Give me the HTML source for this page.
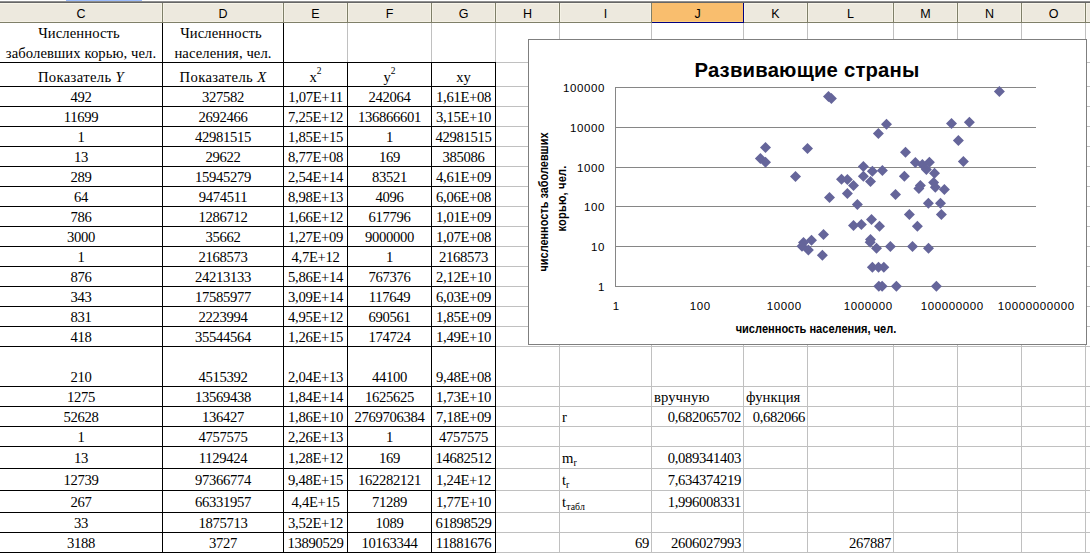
<!DOCTYPE html>
<html><head><meta charset="utf-8"><style>
*{margin:0;padding:0}
html,body{width:1090px;height:553px;overflow:hidden;background:#fff}
body{position:relative}
#pg>div{position:absolute}
.hl{position:absolute;top:4px;height:17px;line-height:21px;text-align:center;font-family:"Liberation Sans",sans-serif;font-size:12.5px;color:#000}
.c{position:absolute;white-space:nowrap;font-family:"Liberation Serif",serif;font-size:14.67px;line-height:16px;color:#000}
.n{letter-spacing:-0.33px}
.t{letter-spacing:0.08px}
sup{font-size:9.5px;vertical-align:8px;line-height:0}
sub{font-size:9.8px;vertical-align:-3px;line-height:0}
</style></head>
<body><div id="pg"><div style="left:66px;top:0px;width:76px;height:1px;background:#9cbcfc;"></div><div style="left:0px;top:1px;width:1090px;height:1px;background:#8f8f8f;"></div><div style="left:0px;top:2px;width:1090px;height:1px;background:#666666;"></div><div style="left:0px;top:3px;width:1090px;height:19px;background:#ede9de;"></div><div style="left:0px;top:3px;width:1090px;height:1px;background:#f7f4e8;"></div><div style="left:0px;top:21px;width:1090px;height:1px;background:#f5f1e5;"></div><div style="left:0px;top:22px;width:1090px;height:1px;background:#7f7f69;"></div><div style="left:161px;top:3px;width:1px;height:18px;background:#f5f2e6;"></div><div style="left:163px;top:3px;width:1px;height:18px;background:#f5f2e6;"></div><div style="left:162px;top:3px;width:1px;height:20px;background:#7f7f69;"></div><div style="left:282px;top:3px;width:1px;height:18px;background:#f5f2e6;"></div><div style="left:284px;top:3px;width:1px;height:18px;background:#f5f2e6;"></div><div style="left:283px;top:3px;width:1px;height:20px;background:#7f7f69;"></div><div style="left:346px;top:3px;width:1px;height:18px;background:#f5f2e6;"></div><div style="left:348px;top:3px;width:1px;height:18px;background:#f5f2e6;"></div><div style="left:347px;top:3px;width:1px;height:20px;background:#7f7f69;"></div><div style="left:430px;top:3px;width:1px;height:18px;background:#f5f2e6;"></div><div style="left:432px;top:3px;width:1px;height:18px;background:#f5f2e6;"></div><div style="left:431px;top:3px;width:1px;height:20px;background:#7f7f69;"></div><div style="left:494px;top:3px;width:1px;height:18px;background:#f5f2e6;"></div><div style="left:496px;top:3px;width:1px;height:18px;background:#f5f2e6;"></div><div style="left:495px;top:3px;width:1px;height:20px;background:#7f7f69;"></div><div style="left:558px;top:3px;width:1px;height:18px;background:#f5f2e6;"></div><div style="left:560px;top:3px;width:1px;height:18px;background:#f5f2e6;"></div><div style="left:559px;top:3px;width:1px;height:20px;background:#7f7f69;"></div><div style="left:650px;top:3px;width:1px;height:18px;background:#f5f2e6;"></div><div style="left:652px;top:3px;width:1px;height:18px;background:#f5f2e6;"></div><div style="left:651px;top:3px;width:1px;height:20px;background:#7f7f69;"></div><div style="left:742px;top:3px;width:1px;height:18px;background:#f5f2e6;"></div><div style="left:744px;top:3px;width:1px;height:18px;background:#f5f2e6;"></div><div style="left:743px;top:3px;width:1px;height:20px;background:#7f7f69;"></div><div style="left:806px;top:3px;width:1px;height:18px;background:#f5f2e6;"></div><div style="left:808px;top:3px;width:1px;height:18px;background:#f5f2e6;"></div><div style="left:807px;top:3px;width:1px;height:20px;background:#7f7f69;"></div><div style="left:892px;top:3px;width:1px;height:18px;background:#f5f2e6;"></div><div style="left:894px;top:3px;width:1px;height:18px;background:#f5f2e6;"></div><div style="left:893px;top:3px;width:1px;height:20px;background:#7f7f69;"></div><div style="left:956px;top:3px;width:1px;height:18px;background:#f5f2e6;"></div><div style="left:958px;top:3px;width:1px;height:18px;background:#f5f2e6;"></div><div style="left:957px;top:3px;width:1px;height:20px;background:#7f7f69;"></div><div style="left:1020px;top:3px;width:1px;height:18px;background:#f5f2e6;"></div><div style="left:1022px;top:3px;width:1px;height:18px;background:#f5f2e6;"></div><div style="left:1021px;top:3px;width:1px;height:20px;background:#7f7f69;"></div><div style="left:1084px;top:3px;width:1px;height:18px;background:#f5f2e6;"></div><div style="left:1086px;top:3px;width:1px;height:18px;background:#f5f2e6;"></div><div style="left:1085px;top:3px;width:1px;height:20px;background:#7f7f69;"></div><div style="left:652px;top:3px;width:91px;height:18px;background:#f9be6e;"></div><div style="left:652px;top:21px;width:91px;height:1px;background:#fbcf80;"></div><div style="left:652px;top:22px;width:92px;height:1px;background:#000080;"></div><div style="left:743px;top:3px;width:1px;height:20px;background:#000080;"></div><div class="hl" style="left:0px;width:162px;">C</div><div class="hl" style="left:163px;width:120px;">D</div><div class="hl" style="left:284px;width:63px;">E</div><div class="hl" style="left:348px;width:83px;">F</div><div class="hl" style="left:432px;width:63px;">G</div><div class="hl" style="left:496px;width:63px;">H</div><div class="hl" style="left:560px;width:91px;">I</div><div class="hl" style="left:652px;width:91px;">J</div><div class="hl" style="left:744px;width:63px;">K</div><div class="hl" style="left:808px;width:85px;">L</div><div class="hl" style="left:894px;width:63px;">M</div><div class="hl" style="left:958px;width:63px;">N</div><div class="hl" style="left:1022px;width:63px;">O</div><div style="left:162px;top:23px;width:1px;height:530px;background:#c0c0c0;"></div><div style="left:283px;top:23px;width:1px;height:530px;background:#c0c0c0;"></div><div style="left:347px;top:23px;width:1px;height:530px;background:#c0c0c0;"></div><div style="left:431px;top:23px;width:1px;height:530px;background:#c0c0c0;"></div><div style="left:495px;top:23px;width:1px;height:530px;background:#c0c0c0;"></div><div style="left:559px;top:23px;width:1px;height:530px;background:#c0c0c0;"></div><div style="left:651px;top:23px;width:1px;height:530px;background:#c0c0c0;"></div><div style="left:743px;top:23px;width:1px;height:530px;background:#c0c0c0;"></div><div style="left:807px;top:23px;width:1px;height:530px;background:#c0c0c0;"></div><div style="left:893px;top:23px;width:1px;height:530px;background:#c0c0c0;"></div><div style="left:957px;top:23px;width:1px;height:530px;background:#c0c0c0;"></div><div style="left:1021px;top:23px;width:1px;height:530px;background:#c0c0c0;"></div><div style="left:1085px;top:23px;width:1px;height:530px;background:#c0c0c0;"></div><div style="left:0px;top:62px;width:1090px;height:1px;background:#c0c0c0;"></div><div style="left:0px;top:86px;width:1090px;height:1px;background:#c0c0c0;"></div><div style="left:0px;top:106px;width:1090px;height:1px;background:#c0c0c0;"></div><div style="left:0px;top:126px;width:1090px;height:1px;background:#c0c0c0;"></div><div style="left:0px;top:146px;width:1090px;height:1px;background:#c0c0c0;"></div><div style="left:0px;top:166px;width:1090px;height:1px;background:#c0c0c0;"></div><div style="left:0px;top:186px;width:1090px;height:1px;background:#c0c0c0;"></div><div style="left:0px;top:206px;width:1090px;height:1px;background:#c0c0c0;"></div><div style="left:0px;top:226px;width:1090px;height:1px;background:#c0c0c0;"></div><div style="left:0px;top:246px;width:1090px;height:1px;background:#c0c0c0;"></div><div style="left:0px;top:266px;width:1090px;height:1px;background:#c0c0c0;"></div><div style="left:0px;top:286px;width:1090px;height:1px;background:#c0c0c0;"></div><div style="left:0px;top:306px;width:1090px;height:1px;background:#c0c0c0;"></div><div style="left:0px;top:326px;width:1090px;height:1px;background:#c0c0c0;"></div><div style="left:0px;top:346px;width:1090px;height:1px;background:#c0c0c0;"></div><div style="left:0px;top:386px;width:1090px;height:1px;background:#c0c0c0;"></div><div style="left:0px;top:406px;width:1090px;height:1px;background:#c0c0c0;"></div><div style="left:0px;top:426px;width:1090px;height:1px;background:#c0c0c0;"></div><div style="left:0px;top:446px;width:1090px;height:1px;background:#c0c0c0;"></div><div style="left:0px;top:468px;width:1090px;height:1px;background:#c0c0c0;"></div><div style="left:0px;top:490px;width:1090px;height:1px;background:#c0c0c0;"></div><div style="left:0px;top:512px;width:1090px;height:1px;background:#c0c0c0;"></div><div style="left:0px;top:532px;width:1090px;height:1px;background:#c0c0c0;"></div><div style="left:0px;top:552px;width:1090px;height:1px;background:#c0c0c0;"></div><div style="left:162px;top:23px;width:1px;height:530px;background:#000;"></div><div style="left:283px;top:23px;width:1px;height:530px;background:#000;"></div><div style="left:347px;top:62px;width:1px;height:491px;background:#000;"></div><div style="left:431px;top:62px;width:1px;height:491px;background:#000;"></div><div style="left:495px;top:62px;width:1px;height:491px;background:#000;"></div><div style="left:0px;top:62px;width:496px;height:1px;background:#000;"></div><div style="left:0px;top:86px;width:496px;height:1px;background:#000;"></div><div style="left:0px;top:106px;width:496px;height:1px;background:#000;"></div><div style="left:0px;top:126px;width:496px;height:1px;background:#000;"></div><div style="left:0px;top:146px;width:496px;height:1px;background:#000;"></div><div style="left:0px;top:166px;width:496px;height:1px;background:#000;"></div><div style="left:0px;top:186px;width:496px;height:1px;background:#000;"></div><div style="left:0px;top:206px;width:496px;height:1px;background:#000;"></div><div style="left:0px;top:226px;width:496px;height:1px;background:#000;"></div><div style="left:0px;top:246px;width:496px;height:1px;background:#000;"></div><div style="left:0px;top:266px;width:496px;height:1px;background:#000;"></div><div style="left:0px;top:286px;width:496px;height:1px;background:#000;"></div><div style="left:0px;top:306px;width:496px;height:1px;background:#000;"></div><div style="left:0px;top:326px;width:496px;height:1px;background:#000;"></div><div style="left:0px;top:346px;width:496px;height:1px;background:#000;"></div><div style="left:0px;top:386px;width:496px;height:1px;background:#000;"></div><div style="left:0px;top:406px;width:496px;height:1px;background:#000;"></div><div style="left:0px;top:426px;width:496px;height:1px;background:#000;"></div><div style="left:0px;top:446px;width:496px;height:1px;background:#000;"></div><div style="left:0px;top:468px;width:496px;height:1px;background:#000;"></div><div style="left:0px;top:490px;width:496px;height:1px;background:#000;"></div><div style="left:0px;top:512px;width:496px;height:1px;background:#000;"></div><div style="left:0px;top:532px;width:496px;height:1px;background:#000;"></div><div style="left:0px;top:552px;width:496px;height:1px;background:#000;"></div><div class="c n" style="left:0px;width:162px;top:89px;text-align:center">492</div><div class="c n" style="left:163px;width:120px;top:89px;text-align:center">327582</div><div class="c n" style="left:284px;width:63px;top:89px;text-align:center">1,07E+11</div><div class="c n" style="left:348px;width:83px;top:89px;text-align:center">242064</div><div class="c n" style="left:432px;width:63px;top:89px;text-align:center">1,61E+08</div><div class="c n" style="left:0px;width:162px;top:109px;text-align:center">11699</div><div class="c n" style="left:163px;width:120px;top:109px;text-align:center">2692466</div><div class="c n" style="left:284px;width:63px;top:109px;text-align:center">7,25E+12</div><div class="c n" style="left:348px;width:83px;top:109px;text-align:center">136866601</div><div class="c n" style="left:432px;width:63px;top:109px;text-align:center">3,15E+10</div><div class="c n" style="left:0px;width:162px;top:129px;text-align:center">1</div><div class="c n" style="left:163px;width:120px;top:129px;text-align:center">42981515</div><div class="c n" style="left:284px;width:63px;top:129px;text-align:center">1,85E+15</div><div class="c n" style="left:348px;width:83px;top:129px;text-align:center">1</div><div class="c n" style="left:432px;width:63px;top:129px;text-align:center">42981515</div><div class="c n" style="left:0px;width:162px;top:149px;text-align:center">13</div><div class="c n" style="left:163px;width:120px;top:149px;text-align:center">29622</div><div class="c n" style="left:284px;width:63px;top:149px;text-align:center">8,77E+08</div><div class="c n" style="left:348px;width:83px;top:149px;text-align:center">169</div><div class="c n" style="left:432px;width:63px;top:149px;text-align:center">385086</div><div class="c n" style="left:0px;width:162px;top:169px;text-align:center">289</div><div class="c n" style="left:163px;width:120px;top:169px;text-align:center">15945279</div><div class="c n" style="left:284px;width:63px;top:169px;text-align:center">2,54E+14</div><div class="c n" style="left:348px;width:83px;top:169px;text-align:center">83521</div><div class="c n" style="left:432px;width:63px;top:169px;text-align:center">4,61E+09</div><div class="c n" style="left:0px;width:162px;top:189px;text-align:center">64</div><div class="c n" style="left:163px;width:120px;top:189px;text-align:center">9474511</div><div class="c n" style="left:284px;width:63px;top:189px;text-align:center">8,98E+13</div><div class="c n" style="left:348px;width:83px;top:189px;text-align:center">4096</div><div class="c n" style="left:432px;width:63px;top:189px;text-align:center">6,06E+08</div><div class="c n" style="left:0px;width:162px;top:209px;text-align:center">786</div><div class="c n" style="left:163px;width:120px;top:209px;text-align:center">1286712</div><div class="c n" style="left:284px;width:63px;top:209px;text-align:center">1,66E+12</div><div class="c n" style="left:348px;width:83px;top:209px;text-align:center">617796</div><div class="c n" style="left:432px;width:63px;top:209px;text-align:center">1,01E+09</div><div class="c n" style="left:0px;width:162px;top:229px;text-align:center">3000</div><div class="c n" style="left:163px;width:120px;top:229px;text-align:center">35662</div><div class="c n" style="left:284px;width:63px;top:229px;text-align:center">1,27E+09</div><div class="c n" style="left:348px;width:83px;top:229px;text-align:center">9000000</div><div class="c n" style="left:432px;width:63px;top:229px;text-align:center">1,07E+08</div><div class="c n" style="left:0px;width:162px;top:249px;text-align:center">1</div><div class="c n" style="left:163px;width:120px;top:249px;text-align:center">2168573</div><div class="c n" style="left:284px;width:63px;top:249px;text-align:center">4,7E+12</div><div class="c n" style="left:348px;width:83px;top:249px;text-align:center">1</div><div class="c n" style="left:432px;width:63px;top:249px;text-align:center">2168573</div><div class="c n" style="left:0px;width:162px;top:269px;text-align:center">876</div><div class="c n" style="left:163px;width:120px;top:269px;text-align:center">24213133</div><div class="c n" style="left:284px;width:63px;top:269px;text-align:center">5,86E+14</div><div class="c n" style="left:348px;width:83px;top:269px;text-align:center">767376</div><div class="c n" style="left:432px;width:63px;top:269px;text-align:center">2,12E+10</div><div class="c n" style="left:0px;width:162px;top:289px;text-align:center">343</div><div class="c n" style="left:163px;width:120px;top:289px;text-align:center">17585977</div><div class="c n" style="left:284px;width:63px;top:289px;text-align:center">3,09E+14</div><div class="c n" style="left:348px;width:83px;top:289px;text-align:center">117649</div><div class="c n" style="left:432px;width:63px;top:289px;text-align:center">6,03E+09</div><div class="c n" style="left:0px;width:162px;top:309px;text-align:center">831</div><div class="c n" style="left:163px;width:120px;top:309px;text-align:center">2223994</div><div class="c n" style="left:284px;width:63px;top:309px;text-align:center">4,95E+12</div><div class="c n" style="left:348px;width:83px;top:309px;text-align:center">690561</div><div class="c n" style="left:432px;width:63px;top:309px;text-align:center">1,85E+09</div><div class="c n" style="left:0px;width:162px;top:329px;text-align:center">418</div><div class="c n" style="left:163px;width:120px;top:329px;text-align:center">35544564</div><div class="c n" style="left:284px;width:63px;top:329px;text-align:center">1,26E+15</div><div class="c n" style="left:348px;width:83px;top:329px;text-align:center">174724</div><div class="c n" style="left:432px;width:63px;top:329px;text-align:center">1,49E+10</div><div class="c n" style="left:0px;width:162px;top:369px;text-align:center">210</div><div class="c n" style="left:163px;width:120px;top:369px;text-align:center">4515392</div><div class="c n" style="left:284px;width:63px;top:369px;text-align:center">2,04E+13</div><div class="c n" style="left:348px;width:83px;top:369px;text-align:center">44100</div><div class="c n" style="left:432px;width:63px;top:369px;text-align:center">9,48E+08</div><div class="c n" style="left:0px;width:162px;top:389px;text-align:center">1275</div><div class="c n" style="left:163px;width:120px;top:389px;text-align:center">13569438</div><div class="c n" style="left:284px;width:63px;top:389px;text-align:center">1,84E+14</div><div class="c n" style="left:348px;width:83px;top:389px;text-align:center">1625625</div><div class="c n" style="left:432px;width:63px;top:389px;text-align:center">1,73E+10</div><div class="c n" style="left:0px;width:162px;top:409px;text-align:center">52628</div><div class="c n" style="left:163px;width:120px;top:409px;text-align:center">136427</div><div class="c n" style="left:284px;width:63px;top:409px;text-align:center">1,86E+10</div><div class="c n" style="left:348px;width:83px;top:409px;text-align:center">2769706384</div><div class="c n" style="left:432px;width:63px;top:409px;text-align:center">7,18E+09</div><div class="c n" style="left:0px;width:162px;top:429px;text-align:center">1</div><div class="c n" style="left:163px;width:120px;top:429px;text-align:center">4757575</div><div class="c n" style="left:284px;width:63px;top:429px;text-align:center">2,26E+13</div><div class="c n" style="left:348px;width:83px;top:429px;text-align:center">1</div><div class="c n" style="left:432px;width:63px;top:429px;text-align:center">4757575</div><div class="c n" style="left:0px;width:162px;top:450px;text-align:center">13</div><div class="c n" style="left:163px;width:120px;top:450px;text-align:center">1129424</div><div class="c n" style="left:284px;width:63px;top:450px;text-align:center">1,28E+12</div><div class="c n" style="left:348px;width:83px;top:450px;text-align:center">169</div><div class="c n" style="left:432px;width:63px;top:450px;text-align:center">14682512</div><div class="c n" style="left:0px;width:162px;top:472px;text-align:center">12739</div><div class="c n" style="left:163px;width:120px;top:472px;text-align:center">97366774</div><div class="c n" style="left:284px;width:63px;top:472px;text-align:center">9,48E+15</div><div class="c n" style="left:348px;width:83px;top:472px;text-align:center">162282121</div><div class="c n" style="left:432px;width:63px;top:472px;text-align:center">1,24E+12</div><div class="c n" style="left:0px;width:162px;top:494px;text-align:center">267</div><div class="c n" style="left:163px;width:120px;top:494px;text-align:center">66331957</div><div class="c n" style="left:284px;width:63px;top:494px;text-align:center">4,4E+15</div><div class="c n" style="left:348px;width:83px;top:494px;text-align:center">71289</div><div class="c n" style="left:432px;width:63px;top:494px;text-align:center">1,77E+10</div><div class="c n" style="left:0px;width:162px;top:515px;text-align:center">33</div><div class="c n" style="left:163px;width:120px;top:515px;text-align:center">1875713</div><div class="c n" style="left:284px;width:63px;top:515px;text-align:center">3,52E+12</div><div class="c n" style="left:348px;width:83px;top:515px;text-align:center">1089</div><div class="c n" style="left:432px;width:63px;top:515px;text-align:center">61898529</div><div class="c n" style="left:0px;width:162px;top:535px;text-align:center">3188</div><div class="c n" style="left:163px;width:120px;top:535px;text-align:center">3727</div><div class="c n" style="left:284px;width:63px;top:535px;text-align:center">13890529</div><div class="c n" style="left:348px;width:83px;top:535px;text-align:center">10163344</div><div class="c n" style="left:432px;width:63px;top:535px;text-align:center">11881676</div><div class="c t" style="left:0px;width:158px;top:25px;text-align:center">Численность</div><div class="c t" style="left:0px;width:162px;top:45px;text-align:center">заболевших корью, чел.</div><div class="c t" style="left:163px;width:116px;top:25px;text-align:center">Численность</div><div class="c t" style="left:163px;width:120px;top:45px;text-align:center">населения, чел.</div><div class="c t" style="left:0px;width:162px;top:69px;text-align:center"><span style="letter-spacing:0.35px">Показатель <i>Y</i></span></div><div class="c t" style="left:163px;width:120px;top:69px;text-align:center"><span style="letter-spacing:0.35px">Показатель <i>X</i></span></div><div class="c" style="left:284px;width:63px;top:69px;text-align:center">x<sup>2</sup></div><div class="c" style="left:348px;width:83px;top:69px;text-align:center">y<sup>2</sup></div><div class="c" style="left:432px;width:63px;top:69px;text-align:center">xy</div><div class="c t" style="left:654px;top:389px;">вручную</div><div class="c t" style="left:746px;top:389px;">функция</div><div class="c" style="left:562px;top:409px;">r</div><div class="c n" style="left:652px;width:89px;top:409px;text-align:right">0,682065702</div><div class="c n" style="left:744px;width:61px;top:409px;text-align:right">0,682066</div><div class="c" style="left:562px;top:450px;">m<sub>r</sub></div><div class="c n" style="left:652px;width:89px;top:450px;text-align:right">0,089341403</div><div class="c" style="left:562px;top:472px;">t<sub>r</sub></div><div class="c n" style="left:652px;width:89px;top:472px;text-align:right">7,634374219</div><div class="c t" style="left:562px;top:494px;">t<sub>табл</sub></div><div class="c n" style="left:652px;width:89px;top:494px;text-align:right">1,996008331</div><div class="c n" style="left:560px;width:89px;top:535px;text-align:right">69</div><div class="c n" style="left:652px;width:89px;top:535px;text-align:right">2606027993</div><div class="c n" style="left:808px;width:83px;top:535px;text-align:right">267887</div></div><svg width="1090" height="553" viewBox="0 0 1090 553" style="position:absolute;left:0;top:0"><rect x="528.5" y="39.5" width="558" height="305" fill="#fff" stroke="#7f7f7f" stroke-width="1"/><rect x="615" y="87" width="421" height="1" fill="#868686"/><rect x="615" y="127" width="421" height="1" fill="#868686"/><rect x="615" y="167" width="421" height="1" fill="#868686"/><rect x="615" y="206" width="421" height="1" fill="#868686"/><rect x="615" y="246" width="421" height="1" fill="#868686"/><rect x="615" y="286" width="421" height="1" fill="#868686"/><rect x="615" y="87" width="1" height="200" fill="#868686"/><path d="M765.5 141.9L771.0 147.4L765.5 152.9L760.0 147.4Z" fill="#65659a"/><path d="M760.4 152.9L765.9 158.4L760.4 163.9L754.9 158.4Z" fill="#65659a"/><path d="M765.5 156.7L771.0 162.2L765.5 167.7L760.0 162.2Z" fill="#65659a"/><path d="M807.5 142.9L813.0 148.4L807.5 153.9L802.0 148.4Z" fill="#65659a"/><path d="M795.5 170.9L801.0 176.4L795.5 181.9L790.0 176.4Z" fill="#65659a"/><path d="M828.5 91.0L834.0 96.5L828.5 102.0L823.0 96.5Z" fill="#65659a"/><path d="M831.4 93.0L836.9 98.5L831.4 104.0L825.9 98.5Z" fill="#65659a"/><path d="M829.5 191.9L835.0 197.4L829.5 202.9L824.0 197.4Z" fill="#65659a"/><path d="M823.5 229.0L829.0 234.5L823.5 240.0L818.0 234.5Z" fill="#65659a"/><path d="M811.5 234.8L817.0 240.3L811.5 245.8L806.0 240.3Z" fill="#65659a"/><path d="M803.5 237.1L809.0 242.6L803.5 248.1L798.0 242.6Z" fill="#65659a"/><path d="M802.0 240.8L807.5 246.3L802.0 251.8L796.5 246.3Z" fill="#65659a"/><path d="M808.4 244.6L813.9 250.1L808.4 255.6L802.9 250.1Z" fill="#65659a"/><path d="M822.4 249.8L827.9 255.3L822.4 260.8L816.9 255.3Z" fill="#65659a"/><path d="M886.5 118.8L892.0 124.3L886.5 129.8L881.0 124.3Z" fill="#65659a"/><path d="M878.4 127.9L883.9 133.4L878.4 138.9L872.9 133.4Z" fill="#65659a"/><path d="M863.4 160.9L868.9 166.4L863.4 171.9L857.9 166.4Z" fill="#65659a"/><path d="M872.4 165.8L877.9 171.3L872.4 176.8L866.9 171.3Z" fill="#65659a"/><path d="M882.4 165.1L887.9 170.6L882.4 176.1L876.9 170.6Z" fill="#65659a"/><path d="M863.4 170.8L868.9 176.3L863.4 181.8L857.9 176.3Z" fill="#65659a"/><path d="M870.5 175.9L876.0 181.4L870.5 186.9L865.0 181.4Z" fill="#65659a"/><path d="M841.5 173.7L847.0 179.2L841.5 184.7L836.0 179.2Z" fill="#65659a"/><path d="M847.4 173.9L852.9 179.4L847.4 184.9L841.9 179.4Z" fill="#65659a"/><path d="M853.5 179.9L859.0 185.4L853.5 190.9L848.0 185.4Z" fill="#65659a"/><path d="M847.4 187.9L852.9 193.4L847.4 198.9L841.9 193.4Z" fill="#65659a"/><path d="M905.5 146.8L911.0 152.3L905.5 157.8L900.0 152.3Z" fill="#65659a"/><path d="M915.4 156.9L920.9 162.4L915.4 167.9L909.9 162.4Z" fill="#65659a"/><path d="M922.4 159.0L927.9 164.5L922.4 170.0L916.9 164.5Z" fill="#65659a"/><path d="M929.4 156.8L934.9 162.3L929.4 167.8L923.9 162.3Z" fill="#65659a"/><path d="M926.4 164.0L931.9 169.5L926.4 175.0L920.9 169.5Z" fill="#65659a"/><path d="M904.4 170.8L909.9 176.3L904.4 181.8L898.9 176.3Z" fill="#65659a"/><path d="M934.5 167.8L940.0 173.3L934.5 178.8L929.0 173.3Z" fill="#65659a"/><path d="M920.4 180.0L925.9 185.5L920.4 191.0L914.9 185.5Z" fill="#65659a"/><path d="M933.6 177.0L939.1 182.5L933.6 188.0L928.1 182.5Z" fill="#65659a"/><path d="M944.4 183.9L949.9 189.4L944.4 194.9L938.9 189.4Z" fill="#65659a"/><path d="M935.3 181.7L940.8 187.2L935.3 192.7L929.8 187.2Z" fill="#65659a"/><path d="M918.9 183.1L924.4 188.6L918.9 194.1L913.4 188.6Z" fill="#65659a"/><path d="M895.5 188.9L901.0 194.4L895.5 199.9L890.0 194.4Z" fill="#65659a"/><path d="M928.4 197.8L933.9 203.3L928.4 208.8L922.9 203.3Z" fill="#65659a"/><path d="M940.5 197.7L946.0 203.2L940.5 208.7L935.0 203.2Z" fill="#65659a"/><path d="M909.4 208.9L914.9 214.4L909.4 219.9L903.9 214.4Z" fill="#65659a"/><path d="M941.4 208.9L946.9 214.4L941.4 219.9L935.9 214.4Z" fill="#65659a"/><path d="M857.4 198.9L862.9 204.4L857.4 209.9L851.9 204.4Z" fill="#65659a"/><path d="M871.5 213.9L877.0 219.4L871.5 224.9L866.0 219.4Z" fill="#65659a"/><path d="M853.5 220.0L859.0 225.5L853.5 231.0L848.0 225.5Z" fill="#65659a"/><path d="M861.4 218.9L866.9 224.4L861.4 229.9L855.9 224.4Z" fill="#65659a"/><path d="M879.5 220.8L885.0 226.3L879.5 231.8L874.0 226.3Z" fill="#65659a"/><path d="M917.4 220.8L922.9 226.3L917.4 231.8L911.9 226.3Z" fill="#65659a"/><path d="M870.5 234.1L876.0 239.6L870.5 245.1L865.0 239.6Z" fill="#65659a"/><path d="M870.2 236.7L875.7 242.2L870.2 247.7L864.7 242.2Z" fill="#65659a"/><path d="M876.5 242.7L882.0 248.2L876.5 253.7L871.0 248.2Z" fill="#65659a"/><path d="M890.4 240.9L895.9 246.4L890.4 251.9L884.9 246.4Z" fill="#65659a"/><path d="M912.5 241.0L918.0 246.5L912.5 252.0L907.0 246.5Z" fill="#65659a"/><path d="M928.5 242.8L934.0 248.3L928.5 253.8L923.0 248.3Z" fill="#65659a"/><path d="M872.4 261.8L877.9 267.3L872.4 272.8L866.9 267.3Z" fill="#65659a"/><path d="M878.5 261.8L884.0 267.3L878.5 272.8L873.0 267.3Z" fill="#65659a"/><path d="M883.8 261.8L889.3 267.3L883.8 272.8L878.3 267.3Z" fill="#65659a"/><path d="M878.8 280.8L884.3 286.3L878.8 291.8L873.3 286.3Z" fill="#65659a"/><path d="M882.1 280.8L887.6 286.3L882.1 291.8L876.6 286.3Z" fill="#65659a"/><path d="M896.4 280.8L901.9 286.3L896.4 291.8L890.9 286.3Z" fill="#65659a"/><path d="M936.4 280.8L941.9 286.3L936.4 291.8L930.9 286.3Z" fill="#65659a"/><path d="M999.4 85.9L1004.9 91.4L999.4 96.9L993.9 91.4Z" fill="#65659a"/><path d="M951.5 117.9L957.0 123.4L951.5 128.9L946.0 123.4Z" fill="#65659a"/><path d="M969.4 116.8L974.9 122.3L969.4 127.8L963.9 122.3Z" fill="#65659a"/><path d="M958.4 135.0L963.9 140.5L958.4 146.0L952.9 140.5Z" fill="#65659a"/><path d="M963.4 156.0L968.9 161.5L963.4 167.0L957.9 161.5Z" fill="#65659a"/><text x="807" y="77" text-anchor="middle" font-family="Liberation Sans" font-weight="bold" font-size="20.3" letter-spacing="0.2">Развивающие страны</text><text x="605" y="291" text-anchor="end" font-family="Liberation Sans" font-size="11.5" letter-spacing="0.62">1</text><text x="605" y="251" text-anchor="end" font-family="Liberation Sans" font-size="11.5" letter-spacing="0.62">10</text><text x="605" y="211" text-anchor="end" font-family="Liberation Sans" font-size="11.5" letter-spacing="0.62">100</text><text x="605" y="172" text-anchor="end" font-family="Liberation Sans" font-size="11.5" letter-spacing="0.62">1000</text><text x="605" y="132" text-anchor="end" font-family="Liberation Sans" font-size="11.5" letter-spacing="0.62">10000</text><text x="605" y="92" text-anchor="end" font-family="Liberation Sans" font-size="11.5" letter-spacing="0.62">100000</text><text x="616.3" y="310" text-anchor="middle" font-family="Liberation Sans" font-size="11.5" letter-spacing="0.62">1</text><text x="700.3" y="310" text-anchor="middle" font-family="Liberation Sans" font-size="11.5" letter-spacing="0.62">100</text><text x="784.3" y="310" text-anchor="middle" font-family="Liberation Sans" font-size="11.5" letter-spacing="0.62">10000</text><text x="868.3" y="310" text-anchor="middle" font-family="Liberation Sans" font-size="11.5" letter-spacing="0.62">1000000</text><text x="952.3" y="310" text-anchor="middle" font-family="Liberation Sans" font-size="11.5" letter-spacing="0.62">100000000</text><text x="1036.3" y="310" text-anchor="middle" font-family="Liberation Sans" font-size="11.5" letter-spacing="0.62">10000000000</text><text transform="translate(816,333) scale(0.93,1)" text-anchor="middle" font-family="Liberation Sans" font-weight="bold" font-size="11.9">численность населения, чел.</text><text transform="translate(548,202) rotate(-90) scale(0.92,1)" text-anchor="middle" font-family="Liberation Sans" font-weight="bold" font-size="11.9">численность заболевших</text><text transform="translate(565.5,198.5) rotate(-90) scale(0.93,1)" text-anchor="middle" font-family="Liberation Sans" font-weight="bold" font-size="11.9" letter-spacing="0.2">корью, чел.</text></svg></body></html>
